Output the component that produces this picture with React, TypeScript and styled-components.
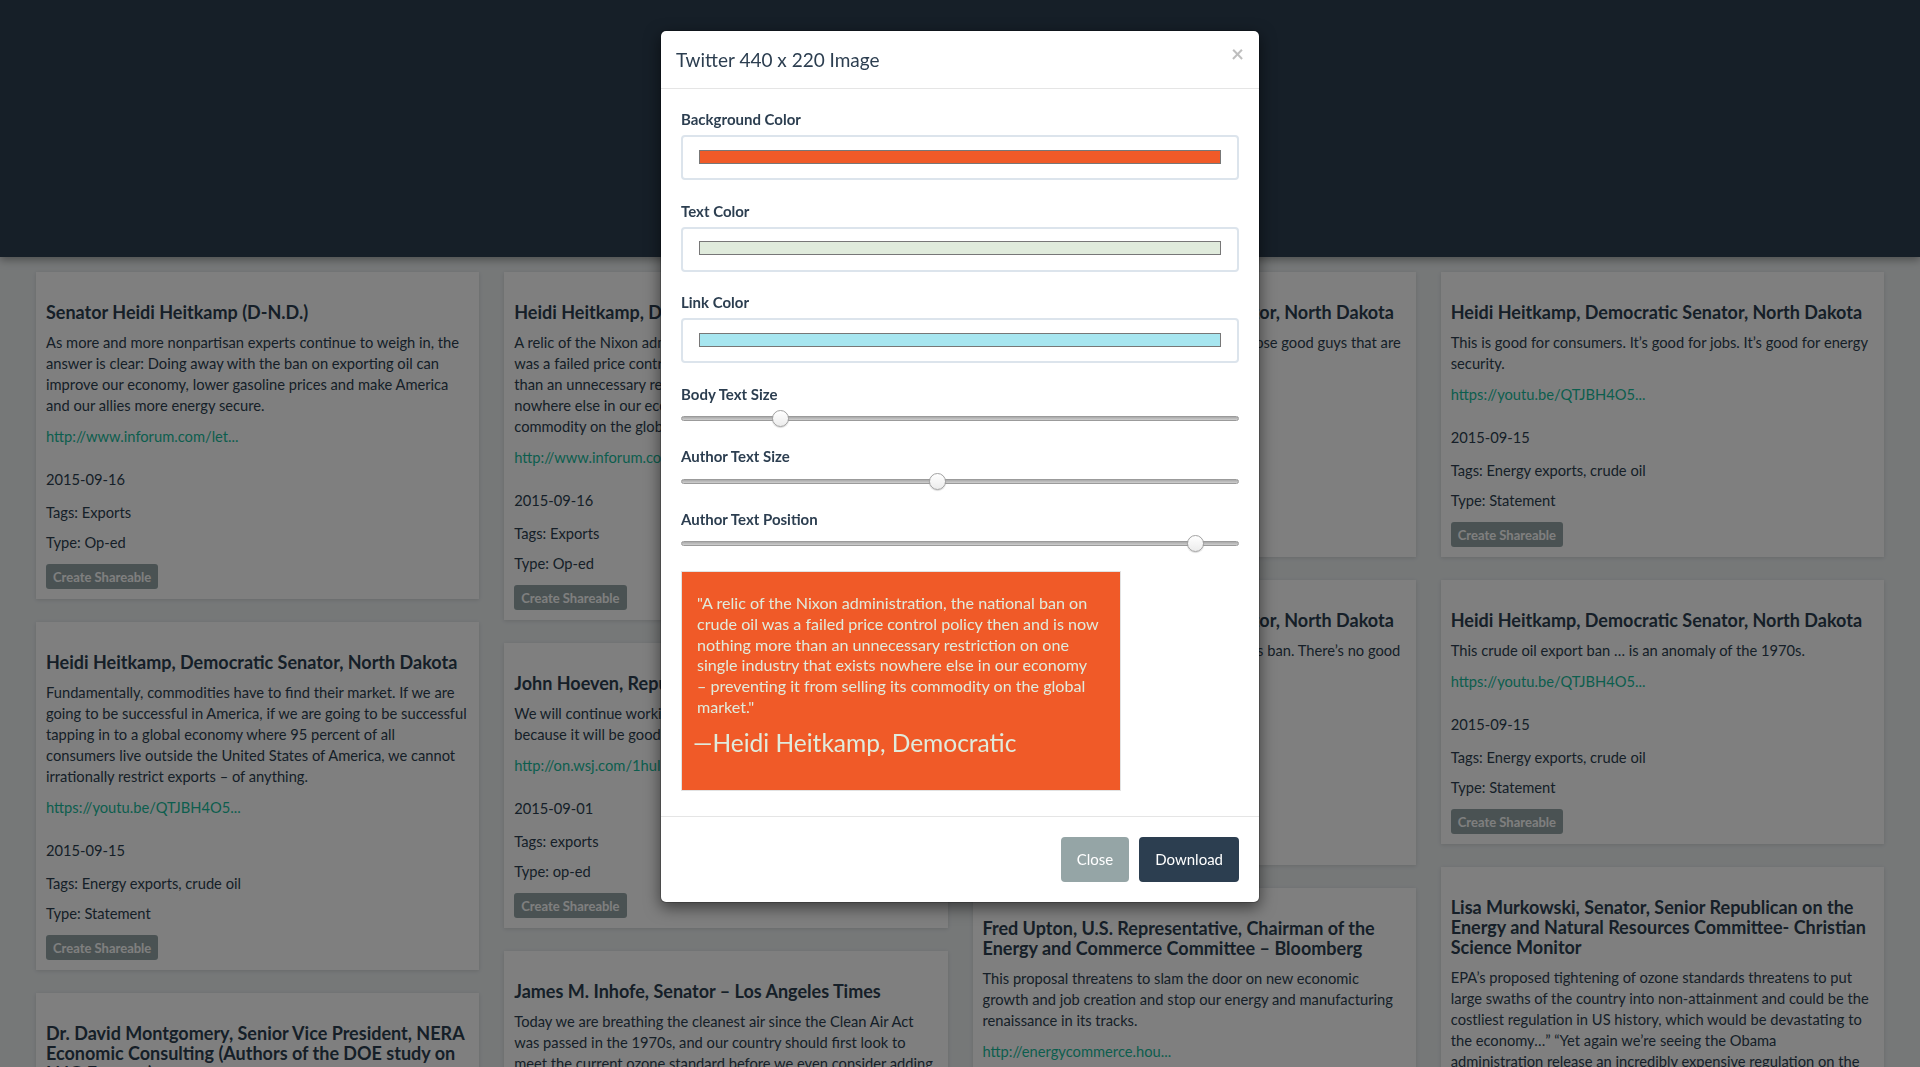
import React from 'react';
import styled, { createGlobalStyle } from 'styled-components';

const GlobalStyle = createGlobalStyle`
  html, body { margin: 0; padding: 0; overflow: hidden; }
  body {
    font-family: Lato, "Helvetica Neue", Arial, sans-serif;
    font-size: 15px;
    line-height: 1.42857;
    color: #2c3e50;
    background: #ecf0f1;
  }
  * { box-sizing: border-box; }
`;

const Page = styled.div`
  min-height: 1067px;
`;

const Header = styled.header`
  height: 257px;
  background: #2c3e50;
  box-shadow: 0 3px 8px rgba(0, 0, 0, 0.35);
  position: relative;
  z-index: 1;
`;

const Grid = styled.main`
  display: grid;
  grid-template-columns: repeat(4, 1fr);
  column-gap: 25px;
  padding: 15px 36px 0;
  align-items: start;
`;

const Column = styled.div`
  display: flex;
  flex-direction: column;
  gap: 23px;
`;

const Card = styled.article`
  background: #fff;
  padding: 30px 11.5px 10px 10px;
  box-shadow: 0 1px 4px rgba(0, 0, 0, 0.12);
`;

const CardTitle = styled.h4`
  margin: 0 0 10px;
  font-size: 18px;
  font-weight: 700;
  line-height: 20px;
`;

const CardText = styled.p<{ $gap?: number }>`
  margin: 0 0 ${(p) => (p.$gap ?? 10)}px;
  font-size: 14.7px;
  line-height: 21px;
  white-space: pre-line;
`;

const CardLink = styled.a`
  color: #18bc9c;
  text-decoration: none;
`;

const ShareButton = styled.button`
  height: 25px;
  padding: 0 7px;
  border: none;
  border-radius: 3px;
  background: #95a5a6;
  color: #fff;
  font-family: Lato, sans-serif;
  font-weight: 700;
  font-size: 13px;
`;

const Backdrop = styled.div`
  position: fixed;
  inset: 0;
  background: rgba(0, 0, 0, 0.5);
  z-index: 10;
`;

const Dialog = styled.div`
  position: fixed;
  top: 30px;
  left: 660px;
  width: 600px;
  background: #fff;
  border: 1px solid rgba(0, 0, 0, 0.2);
  border-radius: 6px;
  box-shadow: 0 5px 15px rgba(0, 0, 0, 0.5);
  z-index: 11;
  background-clip: padding-box;
`;

const ModalHeader = styled.div`
  display: flex;
  justify-content: space-between;
  align-items: flex-start;
  padding: 15px;
  border-bottom: 1px solid #e5e5e5;
`;

const ModalTitle = styled.h4`
  margin: 0;
  font-size: 19px;
  font-weight: 400;
  line-height: 27px;
`;

const CloseX = styled.button`
  margin-top: -3px;
  padding: 0;
  border: 0;
  background: transparent;
  font-family: Lato, sans-serif;
  font-size: 22.5px;
  font-weight: 700;
  line-height: 1;
  color: #000;
  opacity: 0.25;
`;

const ModalBody = styled.div`
  padding: 20px;
`;

const FieldGroup = styled.div<{ $gap: number }>`
  margin-bottom: ${(p) => p.$gap}px;
`;

const FieldLabel = styled.label`
  display: block;
  margin-bottom: 5px;
  font-weight: 700;
  line-height: 21px;
`;

const ColorField = styled.div`
  display: flex;
  align-items: center;
  height: 45px;
  padding: 0 16px;
  border: 2px solid #dce4ec;
  border-radius: 4px;
`;

const Swatch = styled.div<{ $color: string }>`
  flex: 1;
  height: 14px;
  margin-top: -2px;
  border: 1px solid #777;
  background: ${(p) => p.$color};
`;

const Range = styled.input`
  -webkit-appearance: none;
  appearance: none;
  display: block;
  width: 100%;
  height: 18px;
  margin: 0;
  background: transparent;

  &::-webkit-slider-runnable-track {
    height: 5px;
    background: linear-gradient(#a9a9a9, #cfcfcf);
    border: 1px solid #9b9b9b;
    border-radius: 3px;
  }
  &::-webkit-slider-thumb {
    -webkit-appearance: none;
    width: 17px;
    height: 17px;
    margin-top: -7px;
    border-radius: 50%;
    border: 1px solid #a2a2a2;
    background: linear-gradient(#ffffff, #ececec);
    box-shadow: 0 1px 1px rgba(0, 0, 0, 0.15);
  }
`;

const Preview = styled.div`
  width: 440px;
  height: 220px;
  margin-bottom: 5px;
  padding: 21px 15px 0;
  background: #f05a28;
  border: 1px solid #e2e2e2;
  color: #e0ebdc;
  font-family: Lato, "Open Sans", sans-serif;
`;

const QuoteLine = styled.div`
  font-size: 16.1px;
  line-height: 20.8px;
  white-space: nowrap;
`;

const Author = styled.div`
  margin: 10px 0 0 -4px;
  font-size: 24.5px;
  line-height: 30px;
  white-space: nowrap;
`;

const ModalFooter = styled.div`
  display: flex;
  justify-content: flex-end;
  gap: 10px;
  padding: 20px;
  border-top: 1px solid #e5e5e5;
`;

const FooterButton = styled.button<{ $dark?: boolean }>`
  height: 45px;
  padding: 0 14px;
  border: 2px solid ${(p) => (p.$dark ? '#2c3e50' : '#95a5a6')};
  border-radius: 4px;
  background: ${(p) => (p.$dark ? '#2c3e50' : '#95a5a6')};
  color: #fff;
  font-family: Lato, sans-serif;
  font-size: 15px;
  line-height: 21px;
`;

type Item = {
  title: string;
  body: string;
  link: string;
  date: string;
  tags: string;
  type: string;
};

const columns: Item[][] = [
  [
    {
      title: 'Senator Heidi Heitkamp (D-N.D.)',
      body: 'As more and more nonpartisan experts continue to weigh in, the answer is clear: Doing away with the ban on exporting oil can improve our economy, lower gasoline prices and make America and our allies more energy secure.',
      link: 'http://www.inforum.com/let...',
      date: '2015-09-16',
      tags: 'Exports',
      type: 'Op-ed',
    },
    {
      title: 'Heidi Heitkamp, Democratic Senator, North Dakota',
      body: 'Fundamentally, commodities have to find their market. If we are going to be successful in America, if we are going to be successful tapping in to a global economy where 95 percent of all consumers live outside the United States of America, we cannot irrationally restrict exports – of anything.',
      link: 'https://youtu.be/QTJBH4O5...',
      date: '2015-09-15',
      tags: 'Energy exports, crude oil',
      type: 'Statement',
    },
    {
      title: 'Dr. David Montgomery, Senior Vice President, NERA Economic Consulting (Authors of the DOE study on LNG Exports)',
      body: 'In all these scenarios, the U.S. was projected to gain net economic benefits from allowing LNG exports.',
      link: 'http://energy.gov/fe/...',
      date: '2015-09-01',
      tags: 'LNG exports',
      type: 'Study',
    },
  ],
  [
    {
      title: 'Heidi Heitkamp, Democratic Senator, North Dakota',
      body: 'A relic of the Nixon administration, the national ban on crude oil was a failed price control policy then and is now nothing more than an unnecessary restriction on one single industry that exists nowhere else in our economy – preventing it from selling its commodity on the global market.',
      link: 'http://www.inforum.com/let...',
      date: '2015-09-16',
      tags: 'Exports',
      type: 'Op-ed',
    },
    {
      title: 'John Hoeven, Republican Senator, North Dakota',
      body: 'We will continue working to lift the ban on crude oil exports because it will be good for our economy and our security.',
      link: 'http://on.wsj.com/1huI...',
      date: '2015-09-01',
      tags: 'exports',
      type: 'op-ed',
    },
    {
      title: 'James M. Inhofe, Senator – Los Angeles Times',
      body: 'Today we are breathing the cleanest air since the Clean Air Act was passed in the 1970s, and our country should first look to meet the current ozone standard before we even consider adding new regulations.',
      link: 'http://www.latimes.com/...',
      date: '2015-08-28',
      tags: 'Ozone',
      type: 'Op-ed',
    },
  ],
  [
    {
      title: 'Heidi Heitkamp, Democratic Senator, North Dakota',
      body: 'Our allies should be able to buy oil from those good guys that are producing energy right here in America.',
      link: 'https://youtu.be/QTJBH4O5...',
      date: '2015-09-15',
      tags: 'Energy exports, crude oil',
      type: 'Statement',
    },
    {
      title: 'Heidi Heitkamp, Democratic Senator, North Dakota',
      body: 'Congress needs to take a harder look at this ban. There’s no good reason to keep it in place.',
      link: 'https://youtu.be/QTJBH4O5...',
      date: '2015-09-15',
      tags: 'Energy exports, crude oil',
      type: 'Statement',
    },
    {
      title: 'Fred Upton, U.S. Representative, Chairman of the Energy and Commerce Committee – Bloomberg',
      body: 'This proposal threatens to slam the door on new economic growth and job creation and stop our energy and manufacturing renaissance in its tracks.',
      link: 'http://energycommerce.hou...',
      date: '2015-08-27',
      tags: 'Ozone',
      type: 'Statement',
    },
  ],
  [
    {
      title: 'Heidi Heitkamp, Democratic Senator, North Dakota',
      body: 'This is good for consumers. It’s good for jobs. It’s good for energy security.',
      link: 'https://youtu.be/QTJBH4O5...',
      date: '2015-09-15',
      tags: 'Energy exports, crude oil',
      type: 'Statement',
    },
    {
      title: 'Heidi Heitkamp, Democratic Senator, North Dakota',
      body: 'This crude oil export ban … is an anomaly of the 1970s.',
      link: 'https://youtu.be/QTJBH4O5...',
      date: '2015-09-15',
      tags: 'Energy exports, crude oil',
      type: 'Statement',
    },
    {
      title: 'Lisa Murkowski, Senator, Senior Republican on the Energy and Natural Resources Committee- Christian Science Monitor',
      body: 'EPA’s proposed tightening of ozone standards threatens to put large swaths of the country into non-attainment and could be the costliest regulation in US history, which would be devastating to the economy…” “Yet again we’re seeing the Obama\nadministration release an incredibly expensive regulation on the American people.',
      link: 'http://www.csmonitor.com/...',
      date: '2015-08-26',
      tags: 'Ozone',
      type: 'Op-ed',
    },
  ],
];

const quoteLines = [
  '"A relic of the Nixon administration, the national ban on',
  'crude oil was a failed price control policy then and is now',
  'nothing more than an unnecessary restriction on one',
  'single industry that exists nowhere else in our economy',
  '– preventing it from selling its commodity on the global',
  'market."',
];

const ArticleCard: React.FC<{ item: Item }> = ({ item }) => (
  <Card>
    <CardTitle>{item.title}</CardTitle>
    <CardText>{item.body}</CardText>
    <CardText $gap={21.5}>
      <CardLink href="#">{item.link}</CardLink>
    </CardText>
    <CardText $gap={12}>{item.date}</CardText>
    <CardText $gap={9}>Tags: {item.tags}</CardText>
    <CardText $gap={11.5}>Type: {item.type}</CardText>
    <ShareButton>Create Shareable</ShareButton>
  </Card>
);

const ColorGroup: React.FC<{ label: string; color: string }> = ({ label, color }) => (
  <FieldGroup $gap={20.5}>
    <FieldLabel>{label}</FieldLabel>
    <ColorField>
      <Swatch $color={color} />
    </ColorField>
  </FieldGroup>
);

const SliderGroup: React.FC<{ label: string; min: number; max: number; value: number }> = ({
  label,
  min,
  max,
  value,
}) => (
  <FieldGroup $gap={18.5}>
    <FieldLabel>{label}</FieldLabel>
    <Range type="range" min={min} max={max} defaultValue={value} />
  </FieldGroup>
);

export default function App() {
  return (
    <Page>
      <GlobalStyle />
      <Header />
      <Grid>
        {columns.map((col, i) => (
          <Column key={i}>
            {col.map((item, j) => (
              <ArticleCard key={j} item={item} />
            ))}
          </Column>
        ))}
      </Grid>
      <Backdrop />
      <Dialog>
        <ModalHeader>
          <ModalTitle>Twitter 440 x 220 Image</ModalTitle>
          <CloseX>×</CloseX>
        </ModalHeader>
        <ModalBody>
          <ColorGroup label="Background Color" color="#f05a28" />
          <ColorGroup label="Text Color" color="#e0ebdc" />
          <ColorGroup label="Link Color" color="#a7e6f0" />
          <SliderGroup label="Body Text Size" min={8} max={56} value={16} />
          <SliderGroup label="Author Text Size" min={8} max={56} value={30} />
          <SliderGroup label="Author Text Position" min={0} max={220} value={206} />
          <Preview>
            {quoteLines.map((l, i) => (
              <QuoteLine key={i}>{l}</QuoteLine>
            ))}
            <Author>—Heidi Heitkamp, Democratic</Author>
          </Preview>
        </ModalBody>
        <ModalFooter>
          <FooterButton>Close</FooterButton>
          <FooterButton $dark>Download</FooterButton>
        </ModalFooter>
      </Dialog>
    </Page>
  );
}
